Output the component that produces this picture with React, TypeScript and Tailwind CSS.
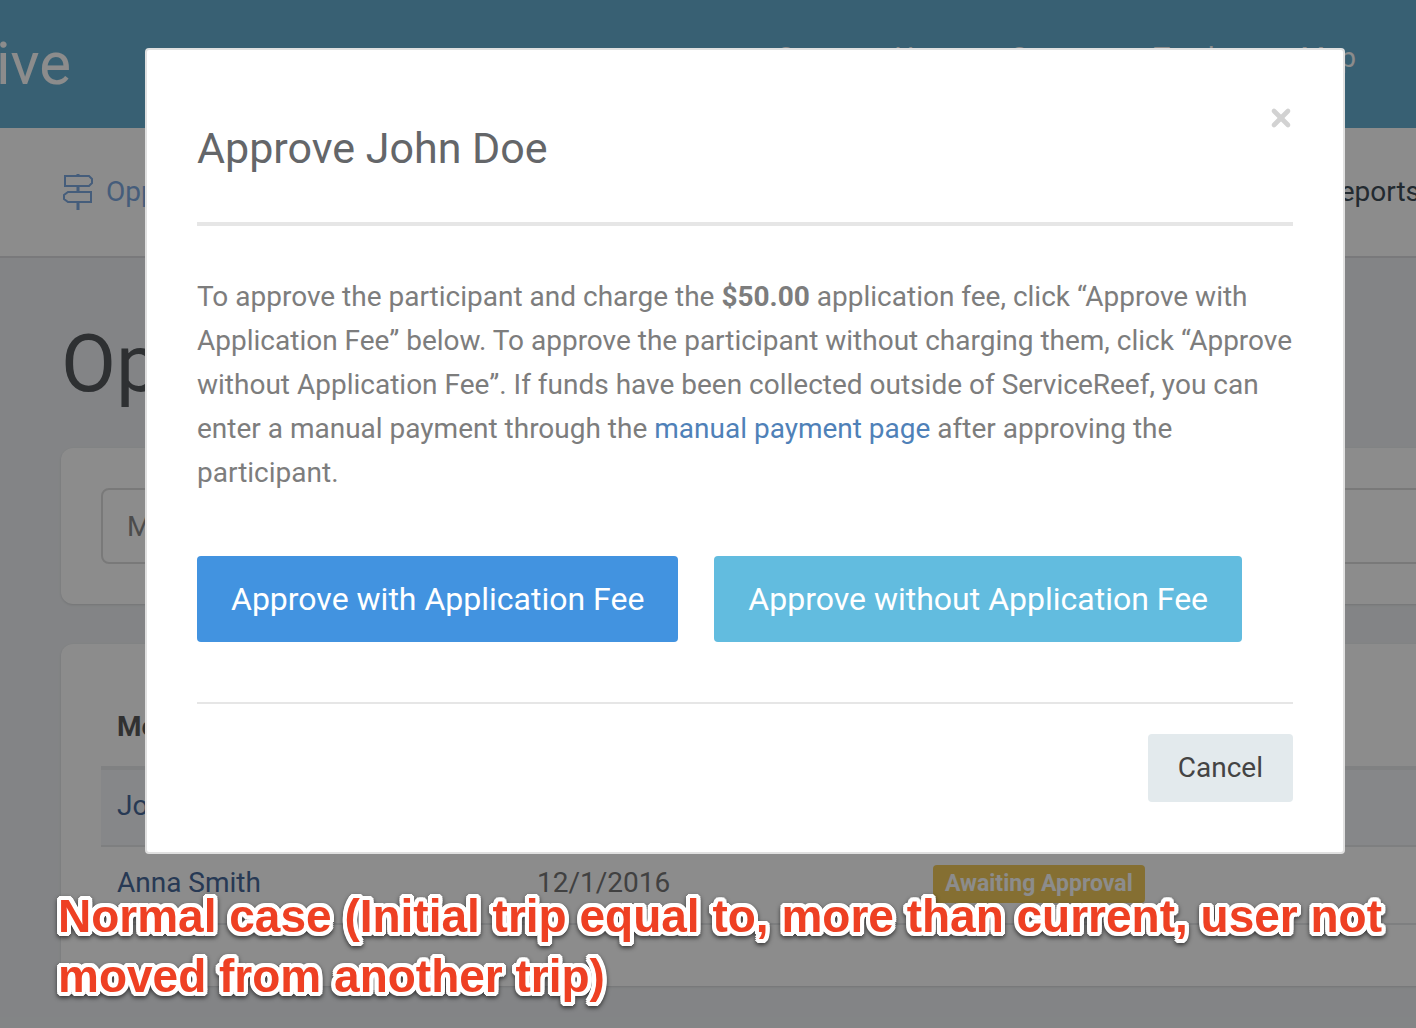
import React from 'react';
import { X } from 'lucide-react';

interface Member {
  name: string;
  date: string;
  status: string;
}

const navItems = ['Cause', 'Home', 'Connect', 'Trackers', 'Map'];

const members: Member[] = [
  { name: 'John Doe', date: '12/1/2016', status: 'Awaiting Approval' },
  { name: 'Anna Smith', date: '12/1/2016', status: 'Awaiting Approval' },
];

const SignpostIcon: React.FC = () => (
  <svg className="w-8 h-9" viewBox="0 0 32 36" fill="none" stroke="currentColor" strokeWidth="2">
    <path d="M16 0v2M16 12v6M16 28v8" strokeWidth="3" />
    <path d="M3 2h24l3 3v4l-3 3H3z" />
    <path d="M29 18H6l-4 3v4l4 3h23z" />
  </svg>
);

const Header: React.FC = () => (
  <header className="flex h-32 items-start justify-between bg-[#67b0d1] pr-[60px] text-white">
    <a href="#" className="-ml-1 pt-8 text-[60px] leading-[64px]">ive</a>
    <nav className="flex gap-10 pt-[38px] text-[28px] leading-10">
      {navItems.map((item) => (
        <a key={item} href="#">{item}</a>
      ))}
    </nav>
  </header>
);

const SubNav: React.FC = () => (
  <nav className="-mr-1 flex h-[130px] items-center justify-between border-b-2 border-[#dcdde0] bg-white pl-[62px] text-[28px]">
    <a href="#" className="flex items-center gap-3 text-[#7fa9e0]">
      <SignpostIcon />
      Opportunities
    </a>
    <a href="#" className="text-[#3f4d58]">Reports</a>
  </nav>
);

const MembersTable: React.FC = () => (
  <table className="w-full text-left text-[28px] leading-9">
    <thead>
      <tr className="h-[84px] border-b-4 border-[#eaebed] text-[#5a5a5a]">
        <th className="w-[420px] px-4 pt-1 font-bold">Member</th>
        <th className="w-[396px] px-4 pt-1 font-bold">Date</th>
        <th className="px-4 pt-1 font-bold">Status</th>
      </tr>
    </thead>
    <tbody>
      {members.map((member) => (
        <tr key={member.name} className="h-[78px] border-b-2 border-[#e6e8ea] align-top odd:bg-[#f4f6fa]">
          <td className="px-4 pt-[18px] text-[#47699a]"><a href="#">{member.name}</a></td>
          <td className="px-4 pt-[18px] text-[#777]">{member.date}</td>
          <td className="px-4 pt-[18px]">
            <span className="block w-fit rounded-sm bg-[#f3cb5b] px-3 text-[23px] font-bold leading-[38px] text-white">
              {member.status}
            </span>
          </td>
        </tr>
      ))}
    </tbody>
  </table>
);

const ApproveDialog: React.FC = () => (
  <div
    role="dialog"
    aria-labelledby="approve-title"
    className="w-full rounded border-2 border-[#e0e0e0] bg-white p-[50px] text-[#7d7d7d]"
  >
    <div className="flex items-start justify-between border-b-4 border-[#e6e6e6] pb-[46px]">
      <h2 id="approve-title" className="pt-5 text-[43px] leading-[56px] text-[#646669]">
        Approve John Doe
      </h2>
      <button aria-label="Close" className="pt-1 text-[#d2d2d2]">
        <X className="-mr-0.5 h-7 w-7" strokeWidth={4} />
      </button>
    </div>
    <p className="pt-[49px] text-[28px] leading-[44px]">
      To approve the participant and charge the <strong>$50.00</strong> application fee, click “Approve with
      Application Fee” below. To approve the participant without charging them, click “Approve without
      Application Fee”. If funds have been collected outside of ServiceReef, you can enter a manual payment
      through the <a href="#" className="text-[#4f81b8]">manual payment page</a> after approving the participant.
    </p>
    <div className="flex gap-9 border-b-2 border-[#e6e6e6] pt-[61px] pb-[60px] text-[32px] leading-[86px] text-white">
      <button className="rounded bg-[#4293e0] px-[34px]">Approve with Application Fee</button>
      <button className="rounded bg-[#62bcdf] px-[34px]">Approve without Application Fee</button>
    </div>
    <div className="flex justify-end pt-[30px]">
      <button className="rounded bg-[#e3eaed] px-[30px] text-[28px] leading-[68px] text-[#444]">Cancel</button>
    </div>
  </div>
);

const App: React.FC = () => {
  return (
    <div className="relative min-h-screen overflow-hidden bg-[#eff1f4] font-[Roboto,sans-serif]">
      <Header />
      <SubNav />
      <main className="-mr-10 pl-[61px]">
        <h1 className="pt-[58px] text-[80px] leading-[96px] text-[#54585c]">Opportunities</h1>
        <section className="mt-9 rounded-xl bg-white py-10 pl-10 shadow-sm">
          <input
            aria-label="Members"
            placeholder="Members"
            className="block h-[76px] w-full rounded-lg border-2 border-[#dddddd] px-6 text-[28px] placeholder:text-[#8b8b8b]"
          />
        </section>
        <section className="mt-10 rounded-xl bg-white pt-10 pb-[61px] pl-10 shadow-sm">
          <MembersTable />
        </section>
      </main>

      <div className="absolute inset-0 bg-black/45 pt-12 pr-[71px] pl-[145px]">
        <ApproveDialog />
      </div>
      <p className="absolute top-[886px] left-0 pr-6 pl-[58px] font-[Liberation_Sans,sans-serif] text-[46px] leading-[60px] font-bold text-[#ee4023] [text-shadow:4px_0_white,4px_2px_white,3px_3px_white,2px_4px_white,0_4px_white,-2px_4px_white,-3px_3px_white,-4px_2px_white,-4px_0_white,-4px_-2px_white,-3px_-3px_white,-2px_-4px_white,0_-4px_white,2px_-4px_white,3px_-3px_white,4px_-2px_white] drop-shadow-[0_2px_2px_rgba(0,0,0,0.6)]">
        Normal case (Initial trip equal to, more than current, user not moved from another trip)
      </p>
    </div>
  );
};

export default App;
